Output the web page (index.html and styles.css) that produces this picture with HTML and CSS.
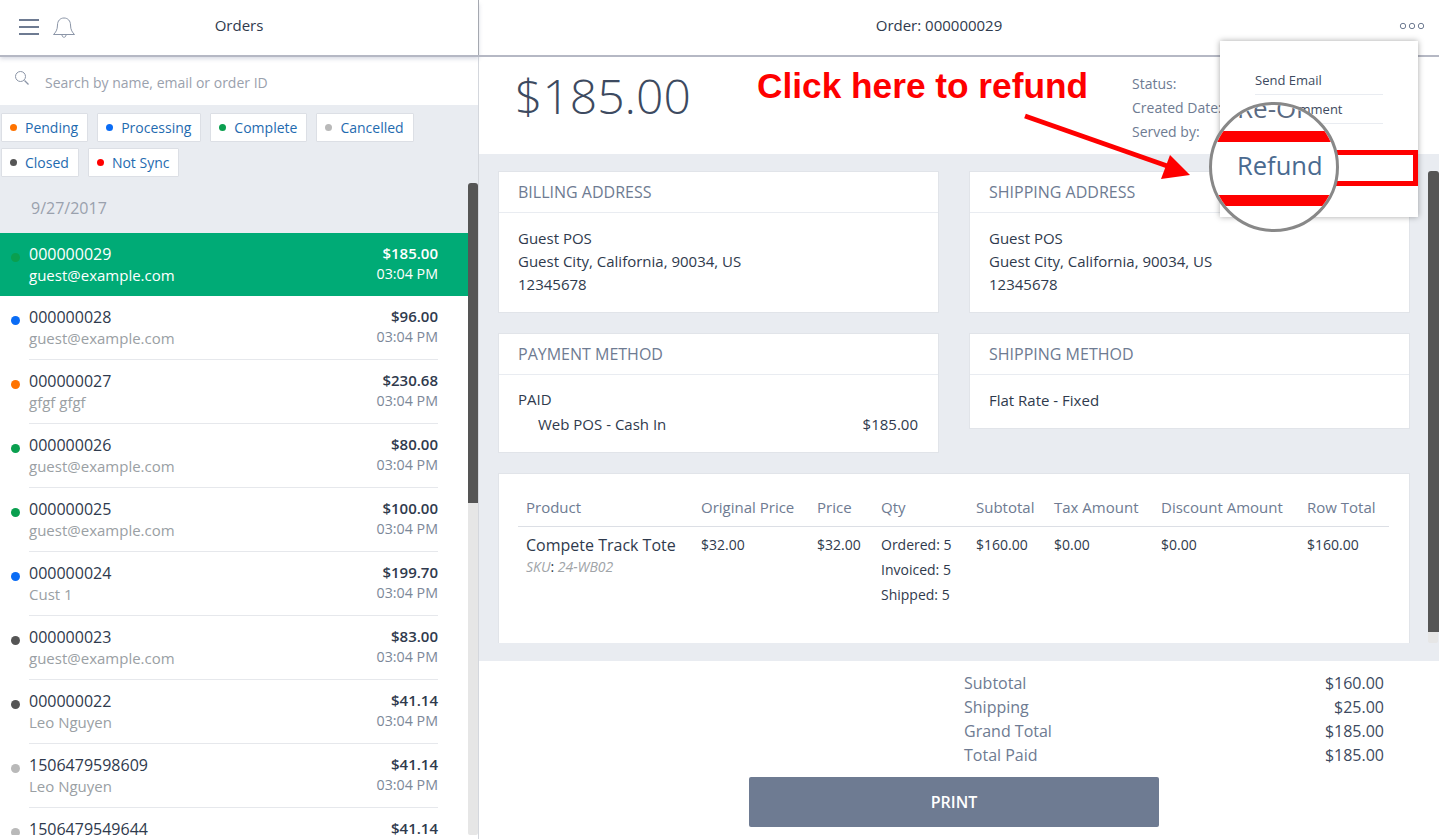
FILE: index.html
```html
<!DOCTYPE html>
<html>
<head>
  <meta charset="utf-8">
  <title>Orders</title>
  <link rel="stylesheet" href="styles.css">
</head>
<body>
  <div class="app">
    <aside class="sidebar">
      <header class="side-header">
        <svg class="menu-icon" width="20" height="16" viewBox="0 0 20 16"><path d="M0 1h20M0 8h20M0 15h20" stroke="#6e7b92" stroke-width="2" fill="none"/></svg>
        <svg class="bell-icon" width="24" height="22" viewBox="0 0 24 22"><path d="M12 1c-4 0-6.500 3-6.500 7 0 5-2 7.500-4 9.500h21c-2-2-4-4.500-4-9.500 0-4-2.500-7-6.500-7zM10 18c0 3 4 3 4 0" stroke="#8b95a7" stroke-width="1" fill="none"/></svg>
        <h1 class="header-title">Orders</h1>
      </header>
      <div class="search">
        <svg width="16" height="16" viewBox="0 0 16 16"><circle cx="6.500" cy="6.500" r="5" stroke="#8b95a7" stroke-width="1" fill="none"/><path d="M10.500 10.500l4 4" stroke="#8b95a7" stroke-width="1.200"/></svg>
        <span>Search by name, email or order ID</span>
      </div>
      <div class="filters">
        <span class="chip"><i class="dot orange"></i>Pending</span>
        <span class="chip"><i class="dot blue"></i>Processing</span>
        <span class="chip"><i class="dot green"></i>Complete</span>
        <span class="chip"><i class="dot silver"></i>Cancelled</span>
        <span class="chip"><i class="dot dark"></i>Closed</span>
        <span class="chip"><i class="dot red"></i>Not Sync</span>
      </div>
      <div class="date">9/27/2017</div>
      <ul class="orders">
        <li class="order active"><i class="dot green"></i><div class="order-body"><div><b>000000029</b><span>guest@example.com</span></div><div class="order-right"><strong>$185.00</strong><time>03:04 PM</time></div></div></li>
        <li class="order"><i class="dot blue"></i><div class="order-body"><div><b>000000028</b><span>guest@example.com</span></div><div class="order-right"><strong>$96.00</strong><time>03:04 PM</time></div></div></li>
        <li class="order"><i class="dot orange"></i><div class="order-body"><div><b>000000027</b><span>gfgf gfgf</span></div><div class="order-right"><strong>$230.68</strong><time>03:04 PM</time></div></div></li>
        <li class="order"><i class="dot green"></i><div class="order-body"><div><b>000000026</b><span>guest@example.com</span></div><div class="order-right"><strong>$80.00</strong><time>03:04 PM</time></div></div></li>
        <li class="order"><i class="dot green"></i><div class="order-body"><div><b>000000025</b><span>guest@example.com</span></div><div class="order-right"><strong>$100.00</strong><time>03:04 PM</time></div></div></li>
        <li class="order"><i class="dot blue"></i><div class="order-body"><div><b>000000024</b><span>Cust 1</span></div><div class="order-right"><strong>$199.70</strong><time>03:04 PM</time></div></div></li>
        <li class="order"><i class="dot dark"></i><div class="order-body"><div><b>000000023</b><span>guest@example.com</span></div><div class="order-right"><strong>$83.00</strong><time>03:04 PM</time></div></div></li>
        <li class="order"><i class="dot dark"></i><div class="order-body"><div><b>000000022</b><span>Leo Nguyen</span></div><div class="order-right"><strong>$41.14</strong><time>03:04 PM</time></div></div></li>
        <li class="order"><i class="dot silver"></i><div class="order-body"><div><b>1506479598609</b><span>Leo Nguyen</span></div><div class="order-right"><strong>$41.14</strong><time>03:04 PM</time></div></div></li>
        <li class="order"><i class="dot silver"></i><div class="order-body"><div><b>1506479549644</b></div><div class="order-right"><strong>$41.14</strong></div></div></li>
      </ul>
      <div class="scroll-track side-track"></div>
      <div class="scroll-thumb side-thumb"></div>
    </aside>

    <main class="main">
      <header class="main-header">
        <h1 class="header-title">Order: 000000029</h1>
        <svg class="more-icon" width="26" height="8" viewBox="0 0 26 8"><g stroke="#6e7b92" stroke-width="1" fill="none"><circle cx="4" cy="4" r="2.700"/><circle cx="13" cy="4" r="2.700"/><circle cx="22" cy="4" r="2.700"/></g></svg>
      </header>
      <section class="summary">
        <div class="grand">$185.00</div>
        <ul class="meta">
          <li>Status:</li>
          <li>Created Date:</li>
          <li>Served by:</li>
        </ul>
      </section>
      <section class="details">
        <div class="card-grid">
          <div class="card">
            <h2>BILLING ADDRESS</h2>
            <div class="card-body">Guest POS<br>Guest City, California, 90034, US<br>12345678</div>
          </div>
          <div class="card">
            <h2>SHIPPING ADDRESS</h2>
            <div class="card-body">Guest POS<br>Guest City, California, 90034, US<br>12345678</div>
          </div>
          <div class="card">
            <h2>PAYMENT METHOD</h2>
            <div class="card-body payment">
              <div>PAID</div>
              <div class="payment-row"><span>Web POS - Cash In</span><span>$185.00</span></div>
            </div>
          </div>
          <div class="card">
            <h2>SHIPPING METHOD</h2>
            <div class="card-body">Flat Rate - Fixed</div>
          </div>
        </div>
        <div class="card items">
          <div class="items-head">
            <span>Product</span><span>Original Price</span><span>Price</span><span>Qty</span><span>Subtotal</span><span>Tax Amount</span><span>Discount Amount</span><span>Row Total</span>
          </div>
          <div class="items-row">
            <div class="product">Compete Track Tote<small><em>SKU</em>: <em>24-WB02</em></small></div>
            <span>$32.00</span><span>$32.00</span>
            <div>Ordered: 5<br>Invoiced: 5<br>Shipped: 5</div>
            <span>$160.00</span><span>$0.00</span><span>$0.00</span><span>$160.00</span>
          </div>
        </div>
        <div class="scroll-track main-track"></div>
        <div class="scroll-thumb main-thumb"></div>
      </section>
      <section class="footer">
        <dl class="totals">
          <dt>Subtotal</dt><dd>$160.00</dd>
          <dt>Shipping</dt><dd>$25.00</dd>
          <dt>Grand Total</dt><dd>$185.00</dd>
          <dt>Total Paid</dt><dd>$185.00</dd>
        </dl>
        <button class="print">PRINT</button>
      </section>
    </main>

    <!-- screenshot annotation laid on top of the page -->
    <div class="dropdown">
      <div class="dropdown-item">Send Email</div>
      <div class="dropdown-item">Add Comment</div>
    </div>
    <div class="refund-box"></div>
    <div class="callout">Click here to refund</div>
    <svg class="arrow" width="200" height="80" viewBox="0 0 200 80"><path d="M2 3L150 55" stroke="#fe0000" stroke-width="5" fill="none"/><path d="M147 42L167 62 138 66z" fill="#fe0000"/></svg>
    <div class="lens">
      <div class="lens-top">Re-Ord</div>
      <div class="lens-bar lens-bar-top"></div>
      <div class="lens-text">Refund</div>
      <div class="lens-bar lens-bar-bottom"></div>
    </div>
  </div>
</body>
</html>
```

FILE: styles.css
```css
html, body {
  margin: 0;
  height: 100%;
  overflow: hidden;
}

body {
  font-family: "Open Sans", sans-serif;
  color: #2f3a4d;
  background-color: #fff;
}

ul {
  list-style: none;
  margin: 0;
  padding: 0;
}

.app {
  display: flex;
  height: 839px;
  position: relative;
  overflow: hidden;
}

/* left column */
.sidebar {
  width: 478px;
  flex: none;
  display: flex;
  flex-direction: column;
  position: relative;
  background-color: #fff;
  border-right: 1px solid #d4d7dd;
}

.side-header {
  height: 55px;
  flex: none;
  display: flex;
  align-items: center;
  position: relative;
  margin-right: -1px;
  border-right: 1px solid #a5a8b0;
  box-shadow: 0 2px 0 #b5b8c4, 0 4px 4px rgba(170, 176, 195, 0.45);
  z-index: 1;
}

.header-title {
  margin: 0 0 6px;
  flex: 1;
  text-align: center;
  font-size: 15px;
  font-weight: 400;
  color: #2f3a4d;
}

.menu-icon {
  position: absolute;
  left: 19px;
  top: 19px;
}

.bell-icon {
  position: absolute;
  left: 52px;
  top: 17px;
}

.search {
  height: 50px;
  flex: none;
  display: flex;
  align-items: center;
  gap: 15px;
  padding-left: 14px;
  font-size: 14px;
  color: #9aa1ad;
}

.search span {
  margin-top: 5px;
}

.search svg {
  margin-top: -5px;
}

.filters {
  display: flex;
  flex-wrap: wrap;
  gap: 6px 9px;
  padding: 8px 0 0 1px;
  background-color: #e9ecf1;
}

.chip {
  height: 27px;
  display: flex;
  align-items: center;
  gap: 8px;
  padding: 0 9px 0 8px;
  font-size: 14px;
  color: #1f6bb0;
  background-color: #fff;
  border: 1px solid #dcdfe5;
  border-radius: 1px;
}

.dot {
  display: block;
  width: 7px;
  height: 7px;
  border-radius: 50%;
  flex: none;
}

.orange { background-color: #ff7300; }
.blue { background-color: #0a6cf5; }
.green { background-color: #0a9f4f; }
.silver { background-color: #b9b9b9; }
.dark { background-color: #555; }
.red { background-color: #f00; }

.date {
  height: 56px;
  line-height: 63px;
  flex: none;
  padding-left: 31px;
  font-size: 16px;
  color: #9aa1ad;
  background-color: #e9ecf1;
}

.orders {
  height: 602px;
  overflow: hidden;
}

.order {
  height: 64px;
  position: relative;
  padding: 0 40px 0 29px;
}

.order .dot {
  position: absolute;
  left: 11px;
  top: 20px;
  width: 9px;
  height: 9px;
}

.order-body {
  height: 64px;
  display: flex;
  justify-content: space-between;
  padding-top: 8px;
  box-sizing: border-box;
  border-bottom: 1px solid #e6e8ec;
}

.order b {
  display: block;
  margin: 1px 0 -1px;
  font-weight: 400;
  font-size: 16px;
  line-height: 24px;
  color: #2f3a4d;
}

.order span {
  display: block;
  font-size: 15px;
  line-height: 20px;
  color: #9aa0a4;
}

.order time {
  display: block;
  font-size: 14.250px;
  line-height: 20px;
  color: #7c8899;
}

.order-right {
  text-align: right;
}

.order strong {
  display: block;
  margin-bottom: -1px;
  font-size: 15px;
  font-weight: 600;
  line-height: 24px;
  color: #2f3a4d;
}

.order.active {
  height: 63px;
  background-color: #00ab76;
}

.order.active b,
.order.active span,
.order.active time,
.order.active strong {
  color: #fff;
}

.order.active .order-body {
  height: 63px;
  border-bottom: 0;
}

.scroll-thumb {
  position: absolute;
  background-color: #555;
  border-radius: 3px 3px 0 0;
}

.scroll-track {
  position: absolute;
  background-color: #e6e6e6;
  border-radius: 0 0 2px 2px;
}

.side-thumb {
  left: 468px;
  top: 183px;
  width: 10px;
  height: 320px;
}

.side-track {
  left: 468px;
  top: 503px;
  width: 10px;
  height: 332px;
}

/* right column */
.main {
  flex: 1;
  display: flex;
  flex-direction: column;
  min-width: 0;
  position: relative;
}

.main-header {
  height: 55px;
  flex: none;
  display: flex;
  align-items: center;
  padding-right: 40px;
  box-shadow: 0 2px 0 #b5b8c4;
  position: relative;
  z-index: 1;
}

.more-icon {
  position: absolute;
  right: 14px;
  top: 22px;
}

.summary {
  height: 99px;
  flex: none;
  position: relative;
  display: flex;
}

.grand {
  margin: 8px 0 0 36px;
  font-size: 48px;
  font-weight: 300;
  line-height: 65px;
  color: #3d4a60;
}

.meta {
  position: absolute;
  left: 653px;
  top: 17px;
  font-size: 14px;
  line-height: 24px;
  color: #6e7b92;
}

.details {
  height: 507px;
  flex: none;
  box-sizing: border-box;
  padding: 17px 29px 0 19px;
  background-color: #e9ecf1;
  position: relative;
  overflow: hidden;
}

.card-grid {
  display: grid;
  grid-template-columns: 441px 441px;
  column-gap: 30px;
  row-gap: 20px;
  align-items: start;
}

.card {
  box-sizing: border-box;
  background-color: #fff;
  border: 1px solid #e1e4e9;
}

.card h2 {
  margin: 0;
  height: 40px;
  line-height: 40px;
  padding-left: 19px;
  font-size: 16px;
  font-weight: 400;
  color: #6e7b92;
  border-bottom: 1px solid #e9ecf1;
}

.card-body {
  padding: 14px 20px 16px 19px;
  font-size: 15px;
  line-height: 23px;
  color: #2f3a4d;
}

.payment {
  padding-top: 13px;
}

.payment-row {
  display: flex;
  justify-content: space-between;
  padding-left: 20px;
  margin-top: 2px;
}

.items {
  margin-top: 20px;
  height: 170px;
  padding: 14px 20px 0 19px;
  border-bottom: 0;
}

.items-head,
.items-row {
  display: grid;
  grid-template-columns: 175px 116px 64px 95px 78px 107px 146px 1fr;
  padding-left: 8px;
}

.items-head {
  height: 38px;
  line-height: 38px;
  font-size: 15px;
  color: #6e7b92;
  border-bottom: 1px solid #dcdfe5;
}

.items-row {
  padding-top: 5px;
  font-size: 14px;
  line-height: 25px;
  color: #2f3a4d;
}

.product {
  font-size: 16px;
  line-height: 26px;
}

.product small {
  display: block;
  font-size: 14px;
  line-height: 17px;
}

.product em {
  color: #a0a4a8;
}

.main-thumb {
  left: 949px;
  top: 17px;
  width: 11px;
  height: 461px;
}

.main-track {
  left: 949px;
  top: 478px;
  width: 10px;
  height: 11px;
}

.footer {
  flex: 1;
  display: flex;
  flex-direction: column;
  position: relative;
}

.totals {
  display: grid;
  grid-template-columns: 1fr auto;
  margin: 10px 55px 0 485px;
  font-size: 16px;
  line-height: 24px;
}

.totals dt {
  color: #6e7b92;
}

.totals dd {
  margin: 0;
  text-align: right;
  color: #3d4a60;
}

.print {
  align-self: flex-start;
  width: 410px;
  height: 50px;
  margin: 10px 0 0 270px;
  padding-bottom: 2px;
  border: none;
  border-radius: 2px;
  font-family: inherit;
  font-size: 16px;
  font-weight: 600;
  color: #fff;
  background-color: #6e7b92;
}

/* annotation layer */
.dropdown {
  position: absolute;
  left: 1220px;
  top: 41px;
  width: 198px;
  height: 176px;
  box-sizing: border-box;
  padding: 25px 35px 0;
  background-color: #fff;
  box-shadow: 0 0 6px rgba(0, 0, 0, 0.35);
  z-index: 2;
}

.dropdown-item {
  height: 28px;
  line-height: 29px;
  font-size: 13px;
  color: #3d4a60;
  border-bottom: 1px solid #e9ecf1;
}

.refund-box {
  position: absolute;
  left: 1330px;
  top: 150px;
  width: 88px;
  height: 36px;
  box-sizing: border-box;
  border: 5px solid #fe0000;
  z-index: 2;
}

.callout {
  position: absolute;
  left: 757px;
  top: 65px;
  font-family: "Liberation Sans", Arial, sans-serif;
  font-size: 35.250px;
  font-weight: 700;
  line-height: 42px;
  color: #fe0000;
  z-index: 2;
}

.arrow {
  position: absolute;
  left: 1023px;
  top: 113px;
  z-index: 2;
}

.lens {
  position: absolute;
  left: 1209px;
  top: 102px;
  width: 130px;
  height: 130px;
  box-sizing: border-box;
  border: 3px solid #888;
  border-radius: 50%;
  background-color: #fff;
  overflow: hidden;
  z-index: 3;
}

.lens-top {
  position: absolute;
  left: 25px;
  top: -12px;
  font-size: 26px;
  line-height: 30px;
  color: #5a6a82;
}

.lens-bar {
  position: absolute;
  left: 0;
  width: 100%;
  height: 11px;
  background-color: #fe0000;
}

.lens-bar-top {
  top: 26px;
}

.lens-bar-bottom {
  top: 90px;
}

.lens-text {
  position: absolute;
  left: 25px;
  top: 42px;
  font-size: 25.500px;
  font-weight: 500;
  line-height: 36px;
  color: #4a6a90;
}
```
